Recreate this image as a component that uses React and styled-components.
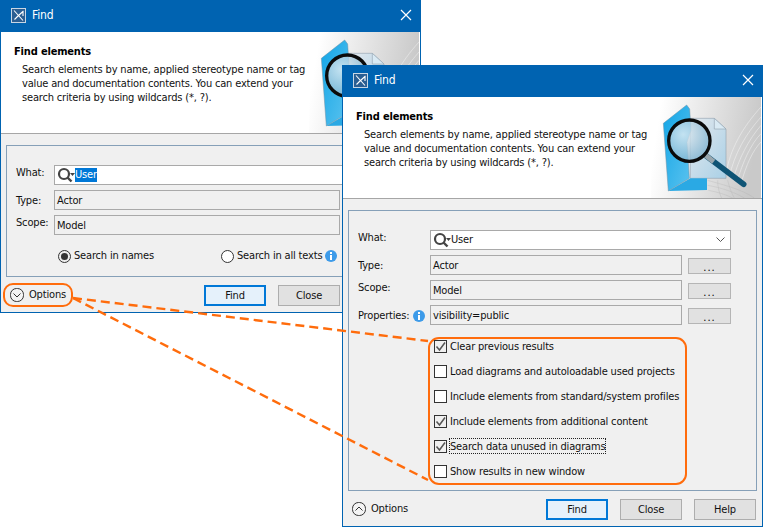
import React from 'react';
import styled, { createGlobalStyle } from 'styled-components';

const GlobalStyle = createGlobalStyle`
  html, body {
    margin: 0;
    background: #ffffff;
  }
  body {
    font-family: "DejaVu Sans", "Noto Sans", sans-serif;
    font-stretch: condensed;
    font-size: 11px;
    letter-spacing: -0.17px;
    line-height: 14px;
    color: #111;
  }
`;

const Desktop = styled.div`
  position: relative;
  width: 763px;
  height: 527px;
  overflow: hidden;
`;

const Window = styled.div`
  position: absolute;
  left: ${p => p.$x}px;
  top: ${p => p.$y}px;
  width: 421px;
  height: ${p => p.$h}px;
  box-sizing: border-box;
  border: 1px solid #0063b1;
  border-top: 0;
  background: #f0f0f0;
  display: flex;
  flex-direction: column;
`;

const TitleBar = styled.div`
  height: 32px;
  margin: 0 -1px;
  flex-shrink: 0;
  box-sizing: border-box;
  background: #0063b1;
  color: #fff;
  display: flex;
  align-items: center;
  padding: 0 9px 2px 11px;
  gap: 6px;
  font-size: 12px;
`;

const TitleText = styled.span`
  flex: 1;
`;

const Header = styled.div`
  height: 102px;
  flex-shrink: 0;
  box-sizing: border-box;
  background: #fff;
  border-bottom: 1px solid #a6a6a6;
  display: flex;
  justify-content: space-between;
`;

const HeaderText = styled.div`
  padding: 13px 0 0 13px;
`;

const HeaderTitle = styled.div`
  font-weight: 700;
  line-height: 14px;
  color: #000;
`;

const HeaderBody = styled.div`
  margin: 4px 0 0 8px;
  line-height: 14px;
  white-space: pre;
`;

const Panel = styled.div`
  flex: 1;
  margin: 11px 5px 0;
  box-sizing: border-box;
  border: 1px solid #86a0b8;
  padding: 19px 25px 0 9px;
`;

const FormGrid = styled.div`
  display: grid;
  grid-template-columns: ${p => p.$label}px 1fr 43px;
  column-gap: 6px;
  row-gap: 5px;
  align-items: center;
`;

const FieldLabel = styled.div`
  grid-column: 1;
  display: flex;
  align-items: center;
  gap: 4px;
  margin-right: -6px;
  white-space: nowrap;
  padding: ${p => (p.$raised ? '0 0 4px' : '2px 0 0')};
`;

const ComboBox = styled.div`
  grid-column: 2 / 4;
  height: 20px;
  box-sizing: border-box;
  border: 1px solid #a9a9a9;
  background: #fff;
  display: flex;
  align-items: center;
  padding: 0 5px 0 2px;
`;

const ComboValue = styled.span`
  flex: 1;
`;

const Selected = styled.span`
  background: ${p => (p.$active ? '#0078d7' : 'transparent')};
  color: ${p => (p.$active ? '#fff' : 'inherit')};
  display: inline-block;
`;

const ReadOnlyField = styled.div`
  height: 20px;
  box-sizing: border-box;
  border: 1px solid #a9a9a9;
  background: #f0f0f0;
  display: flex;
  align-items: center;
  padding: 2px 2px 0;
  white-space: nowrap;
`;

const MoreButton = styled.div`
  height: 16px;
  margin-top: 2px;
  box-sizing: border-box;
  border: 1px solid #b5b5b5;
  background: #e1e1e1;
  text-align: center;
  line-height: 17px;
  letter-spacing: 1px;
  color: #000;
`;

const RadioRow = styled.div`
  display: flex;
  margin: 14px 0 0 42px;
`;

const RadioOption = styled.label`
  display: flex;
  align-items: center;
  gap: 3px;
  width: 163px;
  flex-shrink: 0;
  white-space: nowrap;
`;

const RadioMark = styled.span`
  width: 13px;
  height: 13px;
  box-sizing: border-box;
  border: 1px solid #333;
  border-radius: 50%;
  background: ${p => (p.$on ? '#eee' : '#fff')};
  display: flex;
  align-items: center;
  justify-content: center;
  &::after {
    content: '';
    width: 7px;
    height: 7px;
    border-radius: 50%;
    background: ${p => (p.$on ? '#333' : 'transparent')};
  }
`;

const CheckGroup = styled.div`
  margin: 12px 0 0 70px;
  width: 259px;
  height: 148px;
  box-sizing: border-box;
  border: 2px solid #ff6c0c;
  border-radius: 11px;
  padding: 0 0 0 4px;
  display: flex;
  flex-direction: column;
  gap: 11px;
`;

const CheckRow = styled.div`
  height: 14px;
  flex-shrink: 0;
  display: flex;
  align-items: center;
  gap: 3px;
  white-space: nowrap;
`;

const CheckBox = styled.span`
  width: 13px;
  height: 13px;
  box-sizing: border-box;
  border: 1px solid #333;
  background: ${p => (p.$on ? '#f0f0f0' : '#fff')};
  display: flex;
  flex-shrink: 0;
`;

const CheckLabel = styled.span`
  display: inline-block;
  height: 14px;
  line-height: 16px;
  outline: ${p => (p.$focus ? '1px dotted #222' : 'none')};
`;

const Footer = styled.div`
  height: 35px;
  flex-shrink: 0;
  box-sizing: border-box;
  padding: 1px ${p => (p.$reserve ? 80 : 6)}px 0 2px;
  display: flex;
  align-items: center;
  gap: 12px;
`;

const OptionsToggle = styled.div`
  height: 24px;
  box-sizing: border-box;
  border: 2px solid ${p => (p.$callout ? '#ff6c0c' : 'transparent')};
  border-radius: 10px;
  padding: 0 5px;
  display: flex;
  align-items: center;
  gap: 5px;
  margin-right: auto;
`;

const ToggleCircle = styled.span`
  width: 14px;
  height: 14px;
  display: flex;
`;

const DialogButton = styled.div`
  width: 62px;
  height: 21px;
  box-sizing: border-box;
  border: ${p => (p.$primary ? '1px solid #0078d7' : '1px solid #adadad')};
  box-shadow: ${p => (p.$primary ? 'inset 0 0 0 1px #0078d7' : 'none')};
  background: ${p => (p.$primary ? '#e5f1fb' : '#e1e1e1')};
  text-align: center;
  line-height: 19px;
`;

const Callouts = styled.svg`
  position: absolute;
  left: 0;
  top: 0;
  pointer-events: none;
`;

const WindowIcon = () => (
  <svg width="15" height="15" viewBox="0 0 15 15">
    <rect x="0.5" y="0.5" width="14" height="14" fill="#2b5f93" stroke="#c8d6e4" />
    <path d="M3 2.5 L12 12.5 M12.5 3 L7 8 L3.5 11.5 M12 3 L12 8" stroke="#fff" strokeWidth="1.1" fill="none" />
  </svg>
);

const CloseIcon = () => (
  <svg width="12" height="12" viewBox="0 0 12 12">
    <path d="M1 1 L11 11 M11 1 L1 11" stroke="#fff" strokeWidth="1.2" />
  </svg>
);

const SearchIcon = () => (
  <svg width="18" height="18" viewBox="0 0 18 18" style={{ flexShrink: 0 }}>
    <circle cx="7" cy="8" r="5" fill="none" stroke="#444" strokeWidth="2.2" />
    <path d="M10.5 11.5 L14.5 15.5" stroke="#444" strokeWidth="2.4" />
    <path d="M13 7 L18 7 L15.5 10 Z" fill="#444" />
  </svg>
);

const Chevron = () => (
  <svg width="9" height="6" viewBox="0 0 9 6">
    <path d="M0.5 0.5 L4.5 4.5 L8.5 0.5" fill="none" stroke="#555" />
  </svg>
);

const InfoIcon = () => (
  <svg width="12" height="12" viewBox="0 0 12 12" style={{ flexShrink: 0 }}>
    <circle cx="6" cy="6" r="6" fill="#3d9be9" />
    <rect x="5" y="2" width="2" height="2" fill="#fff" />
    <rect x="5" y="5" width="2" height="5" fill="#fff" />
  </svg>
);

const CheckMark = () => (
  <svg width="11" height="11" viewBox="0 0 11 11">
    <path d="M1.5 5.5 L4.5 9 L10 1.5" fill="none" stroke="#555" strokeWidth="1.5" />
  </svg>
);

const ToggleIcon = ({ up }) => (
  <ToggleCircle>
    <svg width="14" height="14" viewBox="0 0 14 14">
      <rect x="0.5" y="0.5" width="13" height="13" rx="6" fill="#f4f4f4" stroke="#333" />
      <path d={up ? 'M3.5 8.5 L7 5 L10.5 8.5' : 'M3.5 5.5 L7 9 L10.5 5.5'} fill="none" stroke="#333" />
    </svg>
  </ToggleCircle>
);

const HeaderArt = ({ id }) => (
  <svg width="110" height="101" viewBox="0 0 330 303" style={{ flexShrink: 0, marginRight: 1 }}>
    <defs>
      <linearGradient id={`${id}-bg`} x1="0" x2="1" y1="0" y2="0.15">
        <stop offset="0.1" stopColor="#ffffff" />
        <stop offset="1" stopColor="#c9c9c9" />
      </linearGradient>
      <linearGradient id={`${id}-folder`} x1="0" x2="1" y1="0" y2="1">
        <stop offset="0" stopColor="#12a5e6" />
        <stop offset="1" stopColor="#5cc3ef" />
      </linearGradient>
      <linearGradient id={`${id}-doc`} x1="0" x2="1" y1="0" y2="1">
        <stop offset="0" stopColor="#e4e9ee" />
        <stop offset="1" stopColor="#a9d0e6" />
      </linearGradient>
      <radialGradient id={`${id}-lens`} cx="0.35" cy="0.35" r="0.8">
        <stop offset="0" stopColor="#e6eef3" />
        <stop offset="1" stopColor="#6fa9c9" />
      </radialGradient>
    </defs>
    <rect width="330" height="303" fill={`url(#${id}-bg)`} />
    <g fill="none" stroke="#fff" strokeWidth="1.5" opacity="0.8">
      <path d="M330 60 C285 110 250 170 235 240" />
      <path d="M330 85 C295 125 262 185 246 250" />
      <path d="M330 110 C300 140 275 195 258 255" />
      <path d="M330 135 C305 160 285 205 270 260" />
      <path d="M330 30 C275 90 235 160 226 230" />
    </g>
    <g fill="none" stroke="#a8a8a8" strokeWidth="1" opacity="0.7">
      <path d="M170 250 C210 262 270 275 310 303" />
      <path d="M170 265 C210 272 250 285 280 303" />
      <path d="M172 280 C200 285 225 293 245 303" />
      <path d="M200 250 C200 270 205 290 212 303" />
      <path d="M230 250 C235 270 242 290 250 303" />
    </g>
    <path d="M118 64 L190 64 L225 96 L225 244 L118 244 Z" fill={`url(#${id}-doc)`} stroke="#97a6b2" strokeWidth="2" />
    <path d="M190 64 L190 96 L225 96 Z" fill="#d9eaf4" stroke="#97a6b2" strokeWidth="2" />
    <path d="M52 282 L118 244 L168 244 L168 279 Z" fill="#2aa9e4" />
    <path d="M37 79 L107 24 L116 36 L120 100 L108 136 L115 244 L52 282 Z" fill={`url(#${id}-folder)`} stroke="#6e8ea3" strokeWidth="1.5" />
    <path d="M165 176 L278 262" stroke="#0f5475" strokeWidth="17" strokeLinecap="round" />
    <path d="M160 172 L188 194" stroke="#9aa7ae" strokeWidth="15" />
    <circle cx="115" cy="131" r="62" fill={`url(#${id}-lens)`} fillOpacity="0.8" stroke="#0b0b0b" strokeWidth="10" />
  </svg>
);

const DialogTop = ({ id }) => (
  <>
    <TitleBar>
      <WindowIcon />
      <TitleText>Find</TitleText>
      <CloseIcon />
    </TitleBar>
    <Header>
      <HeaderText>
        <HeaderTitle>Find elements</HeaderTitle>
        <HeaderBody>
          {'Search elements by name, applied stereotype name or tag\nvalue and documentation contents. You can extend your\nsearch criteria by using wildcards (*, ?).'}
        </HeaderBody>
      </HeaderText>
      <HeaderArt id={id} />
    </Header>
  </>
);

const checks = [
  { label: 'Clear previous results', on: true },
  { label: 'Load diagrams and autoloadable used projects' },
  { label: 'Include elements from standard/system profiles' },
  { label: 'Include elements from additional content', on: true },
  { label: 'Search data unused in diagrams', on: true, focus: true },
  { label: 'Show results in new window' },
];

const BackDialog = () => (
  <Window $x={0} $y={0} $h={313}>
    <DialogTop id="back" />
    <Panel>
      <FormGrid $label={32}>
        <FieldLabel $raised>What:</FieldLabel>
        <ComboBox>
          <SearchIcon />
          <ComboValue><Selected $active>User</Selected></ComboValue>
        </ComboBox>
        <FieldLabel>Type:</FieldLabel>
        <ReadOnlyField>Actor</ReadOnlyField>
        <FieldLabel $raised>Scope:</FieldLabel>
        <ReadOnlyField>Model</ReadOnlyField>
      </FormGrid>
      <RadioRow>
        <RadioOption><RadioMark $on />Search in names</RadioOption>
        <RadioOption><RadioMark />Search in all texts <InfoIcon /></RadioOption>
      </RadioRow>
    </Panel>
    <Footer $reserve>
      <OptionsToggle $callout><ToggleIcon />Options</OptionsToggle>
      <DialogButton $primary>Find</DialogButton>
      <DialogButton>Close</DialogButton>
    </Footer>
  </Window>
);

const FrontDialog = () => (
  <Window $x={342} $y={65} $h={462}>
    <DialogTop id="front" />
    <Panel>
      <FormGrid $label={66}>
        <FieldLabel $raised>What:</FieldLabel>
        <ComboBox>
          <SearchIcon />
          <ComboValue><Selected>User</Selected></ComboValue>
          <Chevron />
        </ComboBox>
        <FieldLabel>Type:</FieldLabel>
        <ReadOnlyField>Actor</ReadOnlyField>
        <MoreButton>...</MoreButton>
        <FieldLabel $raised>Scope:</FieldLabel>
        <ReadOnlyField>Model</ReadOnlyField>
        <MoreButton>...</MoreButton>
        <FieldLabel>Properties: <InfoIcon /></FieldLabel>
        <ReadOnlyField>visibility=public</ReadOnlyField>
        <MoreButton>...</MoreButton>
      </FormGrid>
      <CheckGroup>
        {checks.map(item => (
          <CheckRow key={item.label}>
            <CheckBox $on={item.on}>{item.on && <CheckMark />}</CheckBox>
            <CheckLabel $focus={item.focus}>{item.label}</CheckLabel>
          </CheckRow>
        ))}
      </CheckGroup>
    </Panel>
    <Footer>
      <OptionsToggle><ToggleIcon up />Options</OptionsToggle>
      <DialogButton $primary>Find</DialogButton>
      <DialogButton>Close</DialogButton>
      <DialogButton>Help</DialogButton>
    </Footer>
  </Window>
);

export default function App() {
  return (
    <Desktop>
      <GlobalStyle />
      <BackDialog />
      <FrontDialog />
      <Callouts width="763" height="527">
        <g stroke="#ff6c0c" strokeWidth="2.4" strokeDasharray="9 5" fill="none">
          <path d="M73 298 L428 341" />
          <path d="M73 298 L428 480" />
        </g>
      </Callouts>
    </Desktop>
  );
}
